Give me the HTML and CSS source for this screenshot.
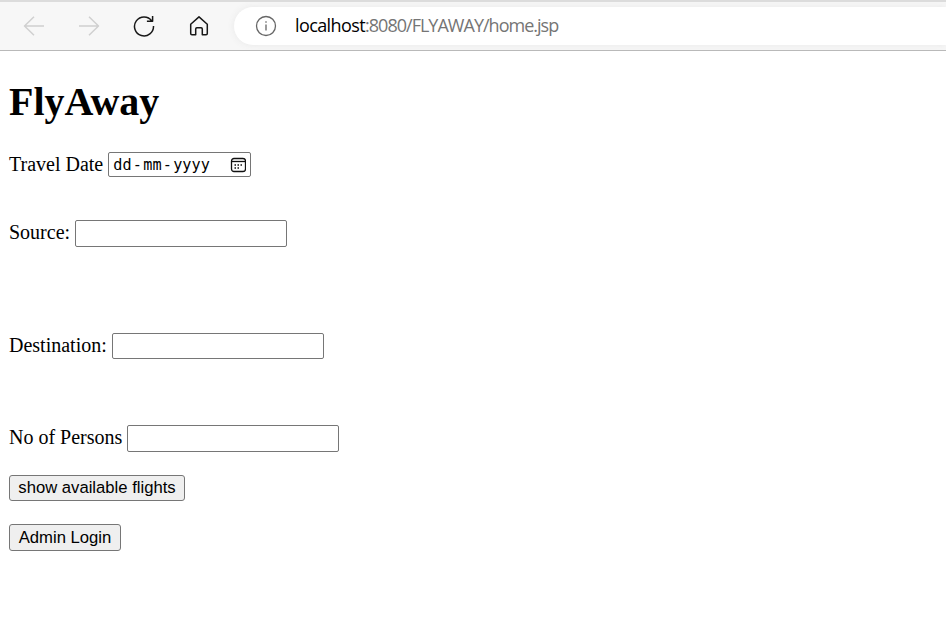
FILE: index.html
```html
<!DOCTYPE html>
<html lang="en">
<head>
<meta charset="utf-8">
<title>FlyAway</title>
<link rel="stylesheet" href="styles.css">
</head>
<body>
<header class="toolbar">
  <nav class="nav">
    <svg class="icon disabled" viewBox="0 0 22 22"><path d="M21 11H1.500M11 1.800 1.500 11l9.500 9.200"/></svg>
    <svg class="icon disabled" viewBox="0 0 22 22"><path d="M1 11h19.500M11 1.800l9.500 9.200-9.500 9.200"/></svg>
    <svg class="icon" viewBox="0 0 22 22"><path d="M18.800 6A9.500 9.500 0 1 0 20.500 11M19.600 1v5.300h-5.700"/></svg>
    <svg class="icon" viewBox="0 0 22 22"><path d="M2.700 9.300 11 1.900l8.300 7.400v9.200q0 1.200-1.200 1.200h-3.800v-5.700q0-1.200-1.200-1.200H8.900q-1.200 0-1.200 1.200v5.700H3.900q-1.200 0-1.200-1.200z"/></svg>
  </nav>
  <div class="address">
    <svg class="info" viewBox="0 0 22 22"><circle cx="11" cy="11" r="9.500"/><path d="M11 9.500v6M11 6.200v1.600"/></svg>
    <span class="url"><span class="host">localhost</span>:8080/FLYAWAY/home.jsp</span>
  </div>
</header>
<main class="page">
  <h1>FlyAway</h1>
  <form class="form">
    <div class="row date-row"><label>Travel Date</label>
      <div class="date"><span>dd</span><span class="dash">-</span><span>mm</span><span class="dash">-</span><span>yyyy</span>
        <svg class="calendar" viewBox="0 0 16 16"><rect x="1.500" y="1.500" width="14" height="13" rx="2.500"/><path d="M1.500 4.500h14"/><path class="dots" d="M7.500 8h1.500M10.500 8h1.500M4.500 11h1.500M7.500 11h1.500M4.500 8h1.500"/></svg>
      </div>
    </div>
    <div class="row source-row"><label for="source">Source:</label><input id="source" type="text"></div>
    <div class="row destination-row"><label for="destination">Destination:</label><input id="destination" class="short" type="text"></div>
    <div class="row persons-row"><label for="persons">No of Persons</label><input id="persons" type="text"></div>
    <button class="flights" type="button">show available flights</button>
    <button class="admin" type="button">Admin Login</button>
  </form>
</main>
</body>
</html>
```
FILE: styles.css
```css
* { box-sizing: border-box; }
body {
  margin: 0;
  background: #fff;
  color: #000;
  font: 20px/23px "Liberation Serif", serif;
}
.toolbar {
  display: flex;
  align-items: center;
  height: 51px;
  border-top: 2px solid #dcdcdc;
  border-bottom: 1px solid #b9b9b9;
  background: #f7f7f7;
  overflow: hidden;
}
.nav {
  display: flex;
  gap: 33px;
  width: 234px;
  padding: 0 0 1px 23px;
}
.icon {
  width: 22px;
  height: 22px;
  fill: none;
  stroke: #181818;
  stroke-width: 1.5;
  stroke-linejoin: round;
}
.disabled { stroke: #d0d0d0; }
.address {
  display: flex;
  align-items: center;
  flex: 1;
  height: 38px;
  padding-left: 21px;
  border-radius: 19px 0 0 19px;
  background: #fff;
  box-shadow: 0 0 7px #e8e8e8;
}
.info {
  width: 22px;
  height: 22px;
  margin-right: 18px;
  fill: none;
  stroke: #666;
  stroke-width: 1.3;
}
.url {
  padding-bottom: 2px;
  color: #757575;
  font: 18px/24px "Open Sans", sans-serif;
  letter-spacing: -0.98px;
  white-space: nowrap;
}
.host {
  color: #000;
  letter-spacing: -0.6px;
}
.page { padding: 28px 9px 0; }
h1 {
  margin: 0;
  font-size: 40px;
  line-height: 46px;
}
.form {
  display: flex;
  flex-direction: column;
  align-items: flex-start;
  padding-top: 27px;
}
.row {
  display: flex;
  gap: 5px;
}
label { line-height: 25px; }
.date-row { margin-bottom: 43px; }
.source-row { margin-bottom: 86px; }
.destination-row { margin-bottom: 66px; }
.persons-row { margin-bottom: 23px; }
input {
  width: 212px;
  height: 27px;
  padding: 1px 2px;
  border: 1px solid #767676;
  border-radius: 2px;
  background: #fff;
}
.short { height: 26px; }
.date {
  display: flex;
  align-items: center;
  width: 143px;
  height: 25px;
  padding: 0 4px;
  border: 1px solid #767676;
  border-radius: 2px;
  font: 15.2px/22px "DejaVu Sans Mono", monospace;
}
.dash {
  width: 11.7px;
  text-align: center;
}
.calendar {
  width: 16px;
  height: 16px;
  margin-left: auto;
  fill: none;
  stroke: #111;
  stroke-width: 1.3;
}
.dots { stroke-width: 1.7; }
button {
  padding: 0;
  border: 1px solid #767676;
  border-radius: 3px;
  background: #efefef;
  color: #000;
  font: 16.667px/23px "Liberation Sans", sans-serif;
  white-space: nowrap;
}
.flights {
  width: 176px;
  height: 26px;
  margin-bottom: 23px;
  padding-bottom: 1px;
}
.admin {
  width: 112px;
  height: 27px;
}
```
